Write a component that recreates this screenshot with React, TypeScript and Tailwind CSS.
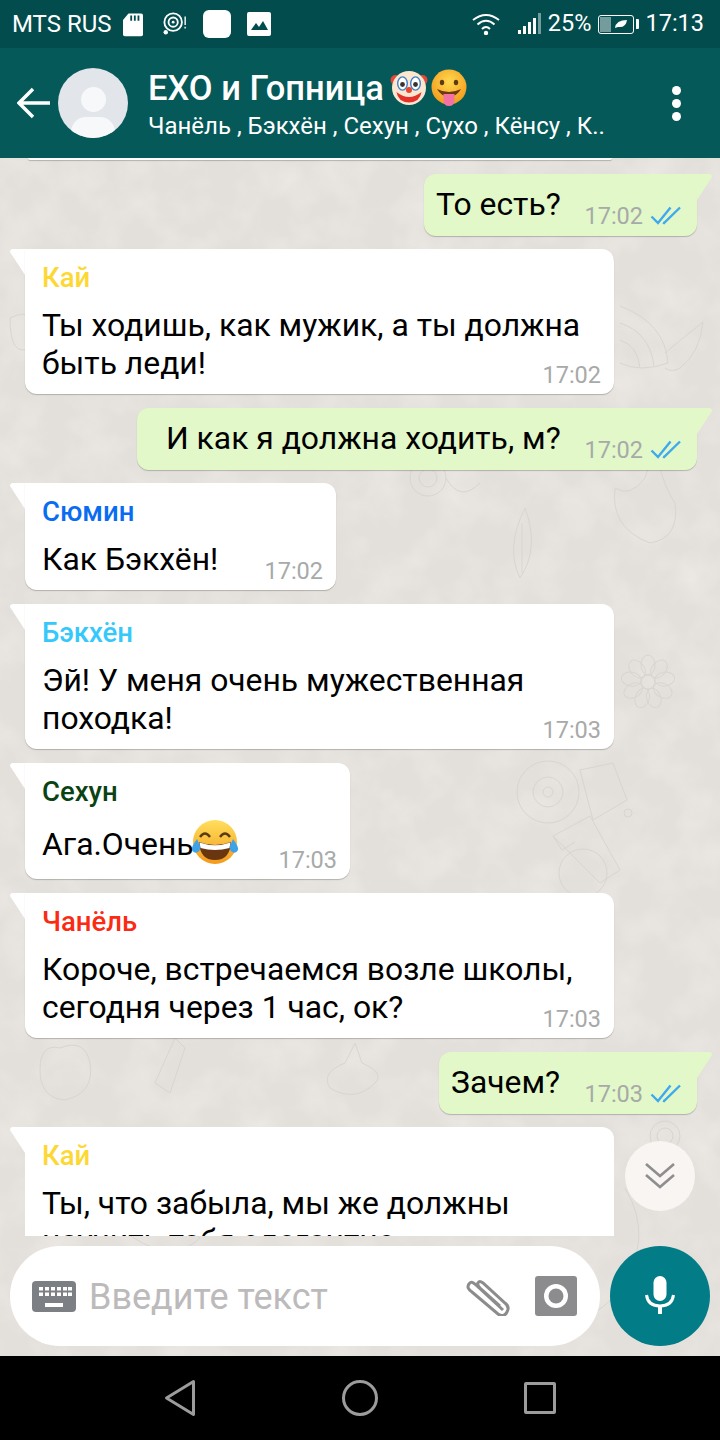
import React from "react";

type Msg = {
  out?: boolean;
  name?: string;
  nameClass?: string;
  lines: string[];
  time: string;
  width: string;
  gap: string;
  indent?: string;
  emoji?: boolean;
};

const messages: Msg[] = [
  { out: true, lines: ["То есть?"], time: "17:02", width: "w-[273px]", gap: "mt-[14px]" },
  {
    name: "Кай",
    nameClass: "text-[#fdd835]",
    lines: ["Ты ходишь, как мужик, а ты должна", "быть леди!"],
    time: "17:02",
    width: "w-[589px]",
    gap: "mt-[13px]",
  },
  {
    out: true,
    lines: ["И как я должна ходить, м?"],
    time: "17:02",
    width: "w-[560px]",
    gap: "mt-[14px]",
    indent: "pl-[17px]",
  },
  {
    name: "Сюмин",
    nameClass: "text-[#0a6cf0]",
    lines: ["Как Бэкхён!"],
    time: "17:02",
    width: "w-[311px]",
    gap: "mt-[13px]",
  },
  {
    name: "Бэкхён",
    nameClass: "text-[#35c8fa]",
    lines: ["Эй! У меня очень мужественная", "походка!"],
    time: "17:03",
    width: "w-[589px]",
    gap: "mt-[14px]",
  },
  {
    name: "Сехун",
    nameClass: "text-[#0b4213]",
    lines: ["Ага.Очень"],
    emoji: true,
    time: "17:03",
    width: "w-[325px]",
    gap: "mt-[14px]",
  },
  {
    name: "Чанёль",
    nameClass: "text-[#fb2a12]",
    lines: ["Короче, встречаемся возле школы,", "сегодня через 1 час, ок?"],
    time: "17:03",
    width: "w-[589px]",
    gap: "mt-[14px]",
  },
  { out: true, lines: ["Зачем?"], time: "17:03", width: "w-[258px]", gap: "mt-[14px]" },
];

const DoubleCheck = () => (
  <svg width="32" height="22" viewBox="0 0 32 22" fill="none" className="ml-[7px] shrink-0">
    <path d="M1.5 11.5 L8 18 L20.5 2.5" stroke="#3fa9ee" strokeWidth="2.4" />
    <path d="M13 17.5 L14 18 L30 2.5" stroke="#3fa9ee" strokeWidth="2.4" />
  </svg>
);

const ClownEmoji = () => (
  <svg width="38" height="38" viewBox="0 0 38 38">
    <circle cx="5.5" cy="11" r="5" fill="#e2493b" />
    <circle cx="32.5" cy="11" r="5" fill="#e2493b" />
    <circle cx="19" cy="19" r="17" fill="#fbe7d0" />
    <ellipse cx="12.5" cy="14.5" rx="4.8" ry="6.6" fill="#fff" stroke="#3f7fc7" strokeWidth="1.4" />
    <ellipse cx="25.5" cy="14.5" rx="4.8" ry="6.6" fill="#fff" stroke="#3f7fc7" strokeWidth="1.4" />
    <circle cx="12.5" cy="15.5" r="2.4" fill="#3a3230" />
    <circle cx="25.5" cy="15.5" r="2.4" fill="#3a3230" />
    <circle cx="19" cy="21" r="3" fill="#e8442f" />
    <path d="M6.5 23 Q19 33 31.5 23 Q30 33 19 33.5 Q8 33 6.5 23 Z" fill="#e2322b" />
  </svg>
);

const TongueEmoji = () => (
  <svg width="36" height="38" viewBox="0 0 36 38" className="ml-[3px]">
    <defs>
      <radialGradient id="tongueFace" cx="50%" cy="35%" r="65%">
        <stop offset="0%" stopColor="#ffd84f" />
        <stop offset="100%" stopColor="#f39a1c" />
      </radialGradient>
    </defs>
    <circle cx="18" cy="18" r="17.5" fill="url(#tongueFace)" />
    <ellipse cx="11" cy="13.5" rx="2.2" ry="2.8" fill="#5c3a12" />
    <ellipse cx="25" cy="13.5" rx="2.2" ry="2.8" fill="#5c3a12" />
    <path d="M6 20 Q18 26 30 20 Q26 27.5 18 27.5 Q10 27.5 6 20 Z" fill="#6b3a10" />
    <path d="M12.5 25 H23.5 V31 Q23.5 37 18 37 Q12.5 37 12.5 31 Z" fill="#f272a4" />
  </svg>
);

const LaughEmoji = () => (
  <svg width="48" height="46" viewBox="0 0 48 46" className="my-[0.5px] -ml-[3px] -translate-y-[2px]">
    <defs>
      <linearGradient id="laughFace" x1="0" y1="0" x2="0" y2="1">
        <stop offset="0%" stopColor="#ffdf5c" />
        <stop offset="100%" stopColor="#f39a1c" />
      </linearGradient>
    </defs>
    <circle cx="24" cy="23" r="22" fill="url(#laughFace)" />
    <path d="M9 18 Q14 11 19 18" stroke="#5c3a12" strokeWidth="2.4" fill="none" />
    <path d="M29 18 Q34 11 39 18" stroke="#5c3a12" strokeWidth="2.4" fill="none" />
    <path d="M8 23 Q24 29 40 23 Q39 41 24 41 Q9 41 8 23 Z" fill="#6a3610" />
    <path d="M8.5 23.5 Q24 29 39.5 23.5 L38.5 29 Q24 33 9.5 29 Z" fill="#fff" />
    <path d="M6 20 Q0 28 1 31 Q3 35 7 33 Q10 31 9 27 Z" fill="#3fa2e8" />
    <path d="M42 20 Q48 28 47 31 Q45 35 41 33 Q38 31 39 27 Z" fill="#3fa2e8" />
  </svg>
);

const Bubble = ({ msg }: { msg: Msg }) => {
  const color = msg.out ? "bg-[#e2f8c8]" : "bg-white";
  return (
    <div className={`flex shrink-0 ${msg.gap} ${msg.out ? "justify-end pr-[8px]" : "pl-[10px]"}`}>
      {!msg.out && (
        <svg width="15" height="26" viewBox="0 0 15 26" className="shrink-0">
          <path d="M0 3 Q0 0 3 0 H15 V26 Z" fill="#fff" />
        </svg>
      )}
      <div
        className={`${msg.width} ${color} flex flex-col ${
          msg.out ? "rounded-l-[12px] rounded-br-[12px] pr-[15px]" : "rounded-r-[12px] rounded-bl-[12px] pr-[13px]"
        } shadow-[0_1px_1px_rgba(0,0,0,0.22)] pl-[12px]`}
      >
        {msg.name && (
          <div className={`${msg.nameClass} pl-[5px] pt-[11px] pb-[10px] text-[27.5px] leading-[36px] font-medium`}>
            {msg.name}
          </div>
        )}
        <div className={`flex justify-end items-end ${msg.out ? "pt-[11px] pb-[5px]" : "pb-[4px]"}`}>
          <div
            className={`flex-1 whitespace-nowrap text-[31.85px] leading-[38px] text-black ${
              msg.out ? `${msg.indent ?? ""} pb-[8px]` : "pl-[5px] pb-[8px]"
            }`}
          >
            {msg.lines.map((l) => (
              <div key={l} className="flex items-center">
                {l}
                {msg.emoji && <LaughEmoji />}
              </div>
            ))}
          </div>
          <div className="flex items-center shrink-0 -ml-[60px] text-[23.5px] leading-[30px] text-[#a7aaa9]">
            {msg.time}
            {msg.out && <DoubleCheck />}
          </div>
        </div>
      </div>
      {msg.out && (
        <svg width="15" height="26" viewBox="0 0 15 26" className="shrink-0">
          <path d="M15 3 Q15 0 12 0 H0 V26 Z" fill="#e2f8c8" />
        </svg>
      )}
    </div>
  );
};

// faint doodles of the chat wallpaper
const Wallpaper = () => (
  <svg width="720" height="1198" viewBox="0 0 720 1198" fill="none" className="absolute inset-0">
    <filter id="marble">
      <feTurbulence type="fractalNoise" baseFrequency="0.025" numOctaves="3" seed="7" />
      <feColorMatrix values="0 0 0 0 1  0 0 0 0 1  0 0 0 0 1  1.1 0 0 0 -0.42" />
    </filter>
    <rect width="720" height="1198" filter="url(#marble)" opacity="0.5" />
    <g stroke="#d9d4ce" strokeWidth="1">
      {/* flower */}
      <g transform="translate(648 524)">
        <circle r="7" />
        {[0, 40, 80, 120, 160, 200, 240, 280, 320].map((a) => (
          <ellipse key={a} cx="0" cy="-17" rx="7" ry="10" transform={`rotate(${a})`} />
        ))}
      </g>
      {/* tractor */}
      <circle cx="548" cy="634" r="31" />
      <circle cx="548" cy="634" r="15" />
      <circle cx="548" cy="634" r="5" />
      <path d="M580 612 L613 605 L627 642 L593 662 Z" />
      <path d="M553 678 L590 658 L620 712 L600 725 Z" />
      <path d="M553 678 L562 692 L575 684" />
      <circle cx="583" cy="715" r="24" />
      <circle cx="628" cy="655" r="4" />
      {/* shell */}
      <path d="M620 148 Q665 165 668 205 Q640 215 620 205" />
      <path d="M620 165 Q650 175 654 208 M620 182 Q638 188 640 210" />
      <path d="M665 195 Q685 178 703 164 Q700 195 680 210 Q672 215 665 210" />
      {/* snail */}
      <circle cx="428" cy="320" r="18" />
      <circle cx="428" cy="320" r="9" />
      <path d="M446 320 Q460 345 480 325" />
      {/* chicken */}
      <path d="M615 330 Q610 370 650 385 Q680 380 675 345 Q665 330 660 310 Q650 300 645 320 Q630 340 615 330 Z" />
      <path d="M655 300 L665 290 L670 305" />
      {/* leaf */}
      <path d="M525 350 Q540 390 520 420 Q505 390 525 350 Z M522 365 V415" />
      {/* spiral top right */}
      <circle cx="665" cy="978" r="15" />
      <circle cx="665" cy="978" r="8" />
      <path d="M625 1030 Q655 1080 620 1130 Q600 1160 570 1160" />
      {/* bottom row figures */}
      <path d="M40 912 Q40 885 60 890 Q85 880 90 905 Q95 935 65 942 Q40 940 40 912 Z" />
      <path d="M170 935 L185 890 L175 880 L155 925 Z" />
      <path d="M330 930 Q320 915 345 905 L355 885 L362 905 Q385 915 375 925 Q355 945 330 930 Z" />
      <path d="M120 1070 Q160 1040 200 1080 Q170 1110 120 1070 Z" />
      <path d="M10 160 Q40 145 30 190 Q10 200 10 160 Z" />
    </g>
  </svg>
);

export default function App() {
  return (
    <div className="w-[720px] h-[1440px] flex flex-col overflow-hidden font-['Roboto',sans-serif]">
      {/* status bar */}
      <div className="h-[48px] shrink-0 bg-[#024c4d] flex items-center pl-[12px] pr-[16px] text-white text-[23.5px]">
        <span className="text-[24px]">MTS RUS</span>
        <svg width="20" height="25" viewBox="0 0 22 26" className="ml-[11px]">
          <path d="M6 1 H20 Q22 1 22 3 V24 Q22 26 20 26 H2 Q0 26 0 24 V8 Z" fill="#fff" />
          <path d="M9 3 V9 M13 3 V9 M17 3 V9" stroke="#024c4d" strokeWidth="2" />
        </svg>
        <svg width="24" height="26" viewBox="0 0 26 26" fill="none" className="ml-[20px]">
          <circle cx="11" cy="11" r="9.5" stroke="#fff" strokeWidth="2" />
          <circle cx="11" cy="11" r="5" stroke="#fff" strokeWidth="2" />
          <circle cx="11" cy="11" r="1.5" fill="#fff" />
          <circle cx="3" cy="22" r="2.4" fill="#fff" />
          <path d="M24 5 V14 M24 16 V18" stroke="#fff" strokeWidth="1.5" />
        </svg>
        <div className="w-[28px] h-[28px] rounded-[6px] bg-white ml-[16px]" />
        <svg width="24" height="24" viewBox="0 0 24 24" className="ml-[16px]">
          <rect width="24" height="24" rx="2" fill="#fff" />
          <path d="M4 18 L9 11 L12 15 L16 9 L21 18 Z" fill="#024c4d" />
        </svg>
        <div className="flex-1" />
        <svg width="28" height="22" viewBox="0 0 28 22" fill="none" className="mr-[18px]">
          <path d="M1 7 Q14 -3 27 7" stroke="#fff" strokeWidth="2" />
          <path d="M5.5 11.5 Q14 4 22.5 11.5" stroke="#fff" strokeWidth="2" />
          <path d="M10 16 Q14 12 18 16" stroke="#fff" strokeWidth="2" />
          <circle cx="14" cy="20" r="2.2" fill="#fff" />
        </svg>
        <svg width="23" height="22" viewBox="0 0 23 22" className="mr-[7px]">
          <rect x="0" y="17" width="3" height="4" fill="#fff" />
          <rect x="5" y="13" width="3" height="8" fill="#fff" />
          <rect x="10" y="9" width="3" height="12" fill="#fff" />
          <rect x="15" y="5" width="3" height="16" fill="#fff" />
          <rect x="20" y="0" width="3" height="21" fill="#fff" opacity="0.45" />
        </svg>
        <span>25%</span>
        <div className="ml-[7px] flex items-center">
          <div className="w-[36px] h-[19px] rounded-[3px] border border-white flex items-center">
            <div className="w-[11px] h-[15px] ml-[1px] bg-white/45" />
            <svg width="14" height="10" viewBox="0 0 14 10" className="ml-[3px]">
              <path d="M1 9 Q2 1 13 1 Q12 9 4 8 Z" fill="#fff" />
            </svg>
          </div>
          <div className="w-[3px] h-[10px] bg-white ml-[2px] rounded-r-[1px]" />
        </div>
        <span className="ml-[6px] text-[23.5px]">17:13</span>
      </div>

      {/* chat header */}
      <div className="h-[110px] shrink-0 bg-[#055959] flex items-center relative z-10">
        <svg width="34" height="32" viewBox="0 0 34 32" fill="none" className="ml-[17px]">
          <path d="M33 16 H3 M16 2 L2 16 L16 30" stroke="#fff" strokeWidth="3.4" />
        </svg>
        <div className="w-[70px] h-[70px] rounded-full bg-[#e2e5ea] ml-[7px] overflow-hidden flex flex-col items-center shrink-0">
          <div className="w-[25px] h-[25px] rounded-full bg-[#f7f8fa] mt-[19px] shrink-0" />
          <div className="w-[44px] h-[30px] rounded-full bg-[#f7f8fa] mt-[5px] shrink-0" />
        </div>
        <div className="ml-[20px] flex flex-col">
          <div className="flex items-center h-[44px] text-white text-[34.5px] font-medium leading-[44px]">
            EXO и Гопница
            <div className="flex items-center ml-[6px]">
              <ClownEmoji />
              <TongueEmoji />
            </div>
          </div>
          <div className="text-white text-[24px] leading-[30px] mt-[1px] whitespace-nowrap">
            Чанёль , Бэкхён , Сехун , Сухо , Кёнсу , К..
          </div>
        </div>
        <div className="flex-1" />
        <div className="flex flex-col gap-[4px] mr-[39px]">
          <div className="w-[9px] h-[9px] rounded-full bg-white" />
          <div className="w-[9px] h-[9px] rounded-full bg-white" />
          <div className="w-[9px] h-[9px] rounded-full bg-white" />
        </div>
      </div>

      {/* conversation */}
      <div className="flex-1 min-h-0 relative bg-[#e3dfda] flex flex-col">
        <Wallpaper />
        <div className="relative flex-1 min-h-0 overflow-hidden flex flex-col">
          {/* bottom edge of the bubble scrolled under the header */}
          <div className="h-[2px] ml-[28px] w-[584px] shrink-0 bg-white rounded-b-[8px] shadow-[0_1px_1px_rgba(0,0,0,0.22)]" />
          {messages.map((m, i) => (
            <Bubble key={i} msg={m} />
          ))}
          {/* last message, cut off by the input bar */}
          <div className="flex shrink-0 mt-[13px] pl-[10px]">
            <svg width="15" height="26" viewBox="0 0 15 26" className="shrink-0">
              <path d="M0 3 Q0 0 3 0 H15 V26 Z" fill="#fff" />
            </svg>
            <div className="w-[589px] bg-white rounded-r-[12px] pl-[17px]">
              <div className="text-[#fdd835] pt-[11px] pb-[10px] text-[27.5px] leading-[36px] font-medium">Кай</div>
              <div className="text-[31.85px] leading-[38px] text-black whitespace-nowrap">
                Ты, что забыла, мы же должны
                <br />
                научить тебя элегантно
              </div>
            </div>
          </div>
        </div>

        <div className="absolute left-[625px] top-[983px] w-[70px] h-[70px] rounded-full bg-[#f8f5f3] flex items-center justify-center">
          <svg width="32" height="28" viewBox="0 0 32 28" fill="none">
            <path d="M2 2 L16 14 L30 2 M2 13 L16 25 L30 13" stroke="#8e8e8e" strokeWidth="2.6" />
          </svg>
        </div>

        {/* input row */}
        <div className="relative shrink-0 mt-[10px] mb-[10px] flex pl-[10px] pr-[10px] justify-between">
          <div className="w-[590px] h-[100px] rounded-full bg-white flex items-center">
            <svg width="44" height="31" viewBox="0 0 44 31" className="ml-[22px] shrink-0">
              <rect width="44" height="31" rx="4" fill="#7c8085" />
              <g fill="#fff">
                {[7, 13, 19, 25, 31, 36].map((x) => (
                  <rect key={x} x={x} y="6" width="4" height="3.5" />
                ))}
                {[7, 13, 19, 25, 31, 36].map((x) => (
                  <rect key={x} x={x} y="11.5" width="4" height="3.5" />
                ))}
                <rect x="13" y="22" width="18" height="4" />
              </g>
            </svg>
            <span className="ml-[13px] mt-[2px] text-[36px] text-[#bcbabb] whitespace-nowrap">Введите текст</span>
            <div className="flex-1" />
            <svg width="44" height="40" viewBox="0 0 44 40" fill="none" className="mr-[25px]">
              <path
                d="M37 34 L10 9 Q5 4 3 8 Q0 12 6 16 L32 38 Q38 42 41 36 Q44 31 39 27 L17 7 Q13 4 12 7 Q11 9 14 12 L34 30"
                stroke="#8c8b8d"
                strokeWidth="3"
              />
            </svg>
            <svg width="42" height="40" viewBox="0 0 42 40" className="mr-[23px]">
              <rect width="42" height="40" rx="3" fill="#8c8b8d" />
              <circle cx="21" cy="20" r="12" fill="#fff" />
              <circle cx="21" cy="20" r="7.5" fill="#8c8b8d" />
            </svg>
          </div>
          <div className="w-[100px] h-[100px] rounded-full bg-[#027c86] flex items-center justify-center">
            <svg width="30" height="40" viewBox="0 0 30 40" fill="none">
              <rect x="8.5" y="0" width="13" height="25" rx="6.5" fill="#fff" />
              <path d="M1.5 19 Q3 30 15 30 Q27 30 28.5 19" stroke="#fff" strokeWidth="3" />
              <path d="M15 30 V38" stroke="#fff" strokeWidth="4" />
            </svg>
          </div>
        </div>
      </div>

      {/* navigation bar */}
      <div className="h-[84px] shrink-0 bg-black flex items-center justify-center gap-[146px]">
        <svg width="32" height="38" viewBox="0 0 32 38" fill="none">
          <path d="M29.5 2.5 L2.5 19 L29.5 35.5 Z" stroke="#9c9c9c" strokeWidth="3" strokeLinejoin="round" />
        </svg>
        <div className="w-[36px] h-[36px] rounded-full border-[3px] border-[#9c9c9c]" />
        <div className="w-[32px] h-[32px] rounded-[2px] border-[3px] border-[#9c9c9c]" />
      </div>
    </div>
  );
}
